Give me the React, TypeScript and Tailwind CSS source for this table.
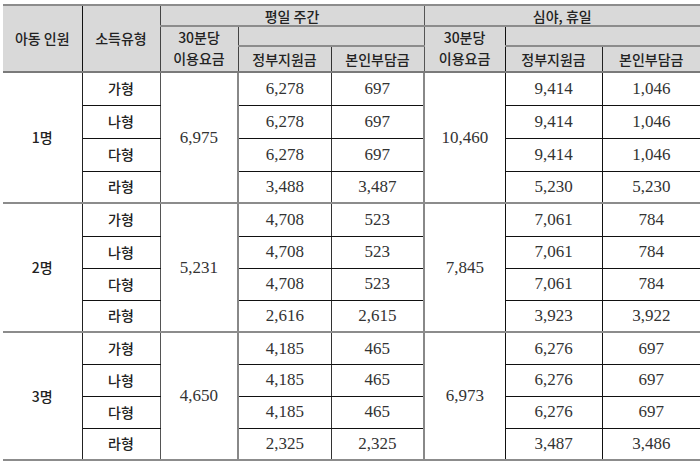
import React from "react"

const ko = "font-['Noto_Sans_CJK_KR','Noto_Sans',sans-serif]"
const num = "font-['Liberation_Serif','DejaVu_Serif',serif]"

type Row = [string, string, string, string]

const groups: { people: string; day: string; night: string; rows: { type: string; v: Row }[] }[] = [
  {
    people: "1명",
    day: "6,975",
    night: "10,460",
    rows: [
      { type: "가형", v: ["6,278", "697", "9,414", "1,046"] },
      { type: "나형", v: ["6,278", "697", "9,414", "1,046"] },
      { type: "다형", v: ["6,278", "697", "9,414", "1,046"] },
      { type: "라형", v: ["3,488", "3,487", "5,230", "5,230"] },
    ],
  },
  {
    people: "2명",
    day: "5,231",
    night: "7,845",
    rows: [
      { type: "가형", v: ["4,708", "523", "7,061", "784"] },
      { type: "나형", v: ["4,708", "523", "7,061", "784"] },
      { type: "다형", v: ["4,708", "523", "7,061", "784"] },
      { type: "라형", v: ["2,616", "2,615", "3,923", "3,922"] },
    ],
  },
  {
    people: "3명",
    day: "4,650",
    night: "6,973",
    rows: [
      { type: "가형", v: ["4,185", "465", "6,276", "697"] },
      { type: "나형", v: ["4,185", "465", "6,276", "697"] },
      { type: "다형", v: ["4,185", "465", "6,276", "697"] },
      { type: "라형", v: ["2,325", "2,325", "3,487", "3,486"] },
    ],
  },
]

const rowHeights = [
  ["h-[33px]", "h-[33px]", "h-[33px]", "h-[32px]"],
  ["h-[33px]", "h-[32px]", "h-[32px]", "h-[32px]"],
  ["h-[32px]", "h-[32px]", "h-[32px]", "h-[32px]"],
]

export default function App() {
  return (
    <div className="w-[700px] h-[470px] bg-white pt-[4px] pl-[3px]">
      <table className="table-fixed border-collapse w-[697px] text-[#222]">
        <colgroup>
          <col className="w-[79px]" />
          <col className="w-[78px]" />
          <col className="w-[78px]" />
          <col className="w-[93px]" />
          <col className="w-[93px]" />
          <col className="w-[81px]" />
          <col className="w-[97px]" />
          <col className="w-[98px]" />
        </colgroup>
        <thead className={`${ko} text-[14px] bg-[#d9d9d9]`}>
          <tr className="h-[21px]">
            <th rowSpan={3} className="font-medium border-t-2 border-t-[#8c8c8c] border-b-2 border-b-[#7a7a7a] border-r border-r-[#111]">
              아동 인원
            </th>
            <th rowSpan={3} className="font-medium border-t-2 border-t-[#8c8c8c] border-b-2 border-b-[#7a7a7a] border-r border-r-[#444]">
              소득유형
            </th>
            <th colSpan={3} className="font-medium border-t-2 border-t-[#8c8c8c] border-b-2 border-b-[#8c8c8c] border-r border-r-[#555] leading-none">
              평일 주간
            </th>
            <th colSpan={3} className="font-medium border-t-2 border-t-[#8c8c8c] border-b-2 border-b-[#8c8c8c] leading-none">
              심야, 휴일
            </th>
          </tr>
          <tr className="h-[18px]">
            <th rowSpan={2} className="font-medium leading-[21px] border-b-2 border-b-[#7a7a7a] border-r border-r-[#444] pb-[2px]">
              30분당
              <br />
              이용요금
            </th>
            <th colSpan={2} className="border-b-2 border-b-[#8c8c8c] border-r border-r-[#555]" />
            <th rowSpan={2} className="font-medium leading-[21px] border-b-2 border-b-[#7a7a7a] border-r border-r-[#111] pb-[2px]">
              30분당
              <br />
              이용요금
            </th>
            <th colSpan={2} className="border-b-2 border-b-[#8c8c8c]" />
          </tr>
          <tr className="h-[23px]">
            <th className="font-medium border-b-2 border-b-[#7a7a7a] border-l border-l-[#111] border-r border-r-[#333]">정부지원금</th>
            <th className="font-medium border-b-2 border-b-[#7a7a7a] border-r border-r-[#555]">본인부담금</th>
            <th className="font-medium border-b-2 border-b-[#7a7a7a] border-r border-r-[#222]">정부지원금</th>
            <th className="font-medium border-b-2 border-b-[#7a7a7a]">본인부담금</th>
          </tr>
        </thead>
        <tbody>
          {groups.map((g, gi) =>
            g.rows.map((r, ri) => {
              const last = ri === 3
              const sep = last ? "border-b-2 border-b-[#8c8c8c]" : "border-b border-b-[#111]"
              return (
                <tr key={`${gi}-${ri}`} className={rowHeights[gi][ri]}>
                  {ri === 0 && (
                    <td
                      rowSpan={4}
                      className={`${ko} text-[14px] font-medium text-center border-b-2 border-b-[#8c8c8c] border-r border-r-[#222]`}
                    >
                      {g.people}
                    </td>
                  )}
                  <td className={`${ko} text-[14px] font-medium text-center ${sep} border-r border-r-[#555]`}>
                    {r.type}
                  </td>
                  {ri === 0 && (
                    <td
                      rowSpan={4}
                      className={`${num} text-[17px] text-[#333] text-center border-b-2 border-b-[#8c8c8c] border-r-2 border-r-[#888]`}
                    >
                      {g.day}
                    </td>
                  )}
                  <td className={`${num} text-[17px] text-[#333] text-center ${sep} border-r border-r-[#333]`}>
                    {r.v[0]}
                  </td>
                  <td className={`${num} text-[17px] text-[#333] text-center ${sep} border-r-2 border-r-[#888]`}>
                    {r.v[1]}
                  </td>
                  {ri === 0 && (
                    <td
                      rowSpan={4}
                      className={`${num} text-[17px] text-[#333] text-center border-b-2 border-b-[#8c8c8c] border-r border-r-[#111]`}
                    >
                      {g.night}
                    </td>
                  )}
                  <td className={`${num} text-[17px] text-[#333] text-center ${sep} border-r border-r-[#111]`}>
                    {r.v[2]}
                  </td>
                  <td className={`${num} text-[17px] text-[#333] text-center ${sep}`}>{r.v[3]}</td>
                </tr>
              )
            })
          )}
        </tbody>
      </table>
    </div>
  )
}
